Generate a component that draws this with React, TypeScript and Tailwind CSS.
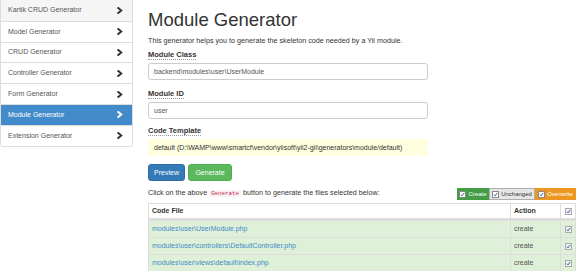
import type { ReactNode } from "react";

const generators = [
  "Kartik CRUD Generator",
  "Model Generator",
  "CRUD Generator",
  "Controller Generator",
  "Form Generator",
  "Module Generator",
  "Extension Generator",
];

const files = [
  "modules\\user\\UserModule.php",
  "modules\\user\\controllers\\DefaultController.php",
  "modules\\user\\views\\default\\index.php",
];

function Chevron({ active }: { active: boolean }) {
  return (
    <svg width="6" height="7" viewBox="0 0 6 7" className="shrink-0">
      <polyline
        points="1.3,1 4.3,3.5 1.3,6"
        fill="none"
        stroke={active ? "#ffffff" : "#333333"}
        strokeWidth="1.9"
        strokeLinecap="square"
      />
    </svg>
  );
}

function Check({ dark }: { dark?: boolean }) {
  return (
    <span
      className={`inline-flex h-[7px] w-[7px] items-center justify-center border ${
        dark ? "border-[#888] bg-white" : "border-[#aaa] bg-[#f4f4f4]"
      }`}
    >
      <svg width="5" height="5" viewBox="0 0 5 5">
        <polyline points="0.8,2.6 2,3.9 4.3,0.8" fill="none" stroke="#2a4c9a" strokeWidth="0.9" />
      </svg>
    </span>
  );
}

function Label({ children }: { children: ReactNode }) {
  return (
    <div className="mb-[3px] text-[7.5px] leading-[10px]">
      <span className="border-b border-dotted border-[#999] font-bold text-[#333]">{children}</span>
    </div>
  );
}

export default function App() {
  return (
    <div
      className="flex h-[271px] w-[576px] overflow-hidden bg-white leading-[10px] text-[#333]"
      style={{ fontFamily: '"Liberation Sans", Arial, sans-serif' }}
    >
      <div className="w-[133px] shrink-0">
        <div className="overflow-hidden rounded-b-[3px] border border-t-0 border-[#ddd]">
          {generators.map((g, i) => {
            const active = g === "Module Generator";
            return (
              <div
                key={g}
                className={`flex h-[20.8px] items-center justify-between pl-[7px] pr-[9px] text-[7px] ${
                  i > 0 ? "border-t border-[#ddd]" : ""
                } ${active ? "bg-[#428bca] text-white" : i === 0 ? "bg-[#f5f5f5] text-[#555]" : "bg-white text-[#555]"}`}
              >
                <span>{g}</span>
                <Chevron active={active} />
              </div>
            );
          })}
        </div>
      </div>

      <div className="flex-1 pl-[15px] pt-[9px]">
        <h1 className="text-[18.5px] leading-[22px] text-[#333]">Module Generator</h1>
        <p className="mt-[5px] text-[7.2px] leading-[9px]">
          This generator helps you to generate the skeleton code needed by a Yii module.
        </p>

        <div className="mt-[5px] w-[280px]">
          <Label>Module Class</Label>
          <div className="flex h-[17px] items-center rounded-[3px] border border-[#ccc] px-[5px] text-[7px] text-[#555]">
            backend\modules\user\UserModule
          </div>

          <div className="mt-[9px]">
            <Label>Module ID</Label>
            <div className="flex h-[17px] items-center rounded-[3px] border border-[#ccc] px-[5px] text-[7px] text-[#555]">
              user
            </div>
          </div>

          <div className="mt-[7px]">
            <Label>Code Template</Label>
            <div className="flex h-[17px] items-center bg-[#ffffe0] px-[6px] text-[7px] text-[#333]">
              default (D:\WAMP\www\smartcf\vendor\yiisoft\yii2-gii\generators\module/default)
            </div>
          </div>
        </div>

        <div className="mt-[8px] flex gap-[3px]">
          <div className="flex h-[17px] w-[37px] items-center justify-center rounded-[3px] border border-[#2e6da4] bg-[#337ab7] text-[7px] text-white">
            Preview
          </div>
          <div className="flex h-[17px] w-[44px] items-center justify-center rounded-[3px] border border-[#4cae4c] bg-[#5cb85c] text-[7px] text-white">
            Generate
          </div>
        </div>

        <div className="mt-[7px] flex items-end justify-between">
          <p className="pb-[2px] text-[7.2px] leading-[9px]">
            Click on the above{" "}
            <code
              className="rounded-[2px] bg-[#f9f2f4] px-[2px] text-[5.8px] text-[#c7254e]"
              style={{ fontFamily: '"Liberation Mono", monospace' }}
            >
              Generate
            </code>{" "}
            button to generate the files selected below:
          </p>
          <div className="flex h-[12px] text-[6px]">
            <div className="flex w-[32px] items-center justify-center gap-[2px] bg-[#449d44] text-white">
              <Check dark />
              Create
            </div>
            <div className="flex w-[46px] items-center justify-center gap-[2px] border border-[#adadad] bg-[#e6e6e6] text-[#333]">
              <Check dark />
              Unchanged
            </div>
            <div className="flex w-[41px] items-center justify-center gap-[2px] bg-[#ec971f] text-white">
              <Check dark />
              Overwrite
            </div>
          </div>
        </div>

        <div className="mt-[3px] border border-[#ddd] text-[7px]">
          <div className="flex h-[16px] items-center border-b-2 border-[#ddd] font-bold">
            <div className="flex-1 pl-[3px]">Code File</div>
            <div className="flex h-full w-[50px] items-center border-l border-[#ddd] pl-[3px]">Action</div>
            <div className="flex h-full w-[15px] items-center justify-center border-l border-[#ddd]">
              <Check />
            </div>
          </div>
          {files.map((f) => (
            <div key={f} className="flex h-[17px] items-center border-t border-[#ddd] bg-[#dff0d8]">
              <div className="flex-1 pl-[3px] text-[#428bca]">{f}</div>
              <div className="flex h-full w-[50px] items-center border-l border-[#ddd] pl-[3px] text-[#555]">
                create
              </div>
              <div className="flex h-full w-[15px] items-center justify-center border-l border-[#ddd]">
                <Check />
              </div>
            </div>
          ))}
        </div>
      </div>
    </div>
  );
}
